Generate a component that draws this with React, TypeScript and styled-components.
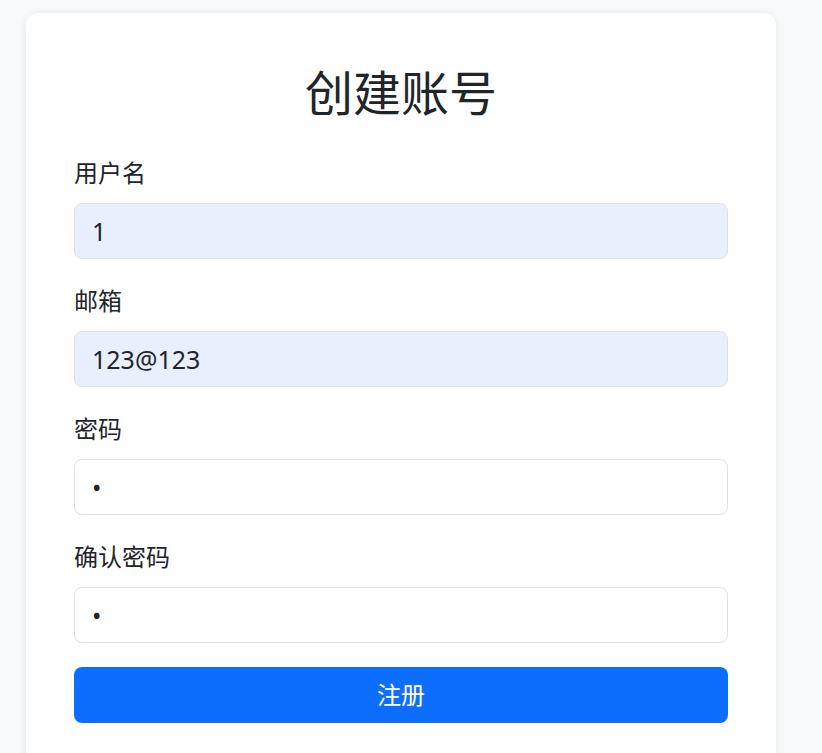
import React from "react";
import styled, { createGlobalStyle } from "styled-components";

const Global = createGlobalStyle`
  html, body { margin: 0; padding: 0; }
  body {
    background: #f8f9fa;
    color: #212529;
    font-family: "Noto Sans", "Noto Sans CJK SC", sans-serif;
  }
`;

const Page = styled.div`
  padding: 13px 46px 0 26px;
  min-height: 753px;
  box-sizing: border-box;
`;

const Card = styled.div`
  background: #fff;
  border-radius: 12px;
  box-shadow: 0 2px 10px rgba(0, 0, 0, 0.08);
  padding: 48px 48px 48px;
  width: 750px;
  box-sizing: border-box;
`;

const Title = styled.h1`
  margin: 0 0 40px;
  font-size: 48px;
  line-height: 58px;
  font-weight: 400;
  text-align: center;
  color: #212529;
  font-family: "Noto Sans CJK SC", sans-serif;
`;

const Form = styled.form`
  display: flex;
  flex-direction: column;
`;

const Group = styled.div`
  display: flex;
  flex-direction: column;
  margin-bottom: 28px;
  &:last-of-type { margin-bottom: 24px; }
`;

const Label = styled.label`
  font-size: 24px;
  line-height: 26px;
  margin-bottom: 18px;
  font-family: "Noto Sans CJK SC", sans-serif;
  color: #212529;
`;

const Input = styled.input<{ $filled?: boolean }>`
  height: 56px;
  box-sizing: border-box;
  border: 1px solid #dee2e6;
  border-radius: 8px;
  padding: 0 17px;
  font-size: 25px;
  font-family: "Noto Sans", "Noto Sans CJK SC", sans-serif;
  color: #212529;
  background: ${(p) => (p.$filled ? "#e8f0fe" : "#fff")};
  outline: none;
`;

const Button = styled.button`
  height: 56px;
  border: none;
  border-radius: 8px;
  background: #0d6efd;
  color: #fff;
  font-size: 24px;
  padding: 0 0 3px;
  font-family: "Noto Sans CJK SC", sans-serif;
  cursor: pointer;
`;

const fields = [
  { label: "用户名", type: "text", value: "1", filled: true },
  { label: "邮箱", type: "email", value: "123@123", filled: true },
  { label: "密码", type: "password", value: "1", filled: false },
  { label: "确认密码", type: "password", value: "1", filled: false },
];

export default function App() {
  return (
    <>
      <Global />
      <Page>
        <Card>
          <Title>创建账号</Title>
          <Form onSubmit={(e) => e.preventDefault()}>
            {fields.map((f, i) => (
              <Group key={i}>
                <Label>{f.label}</Label>
                <Input type={f.type} defaultValue={f.value} $filled={f.filled} />
              </Group>
            ))}
            <Button type="submit">注册</Button>
          </Form>
        </Card>
      </Page>
    </>
  );
}
